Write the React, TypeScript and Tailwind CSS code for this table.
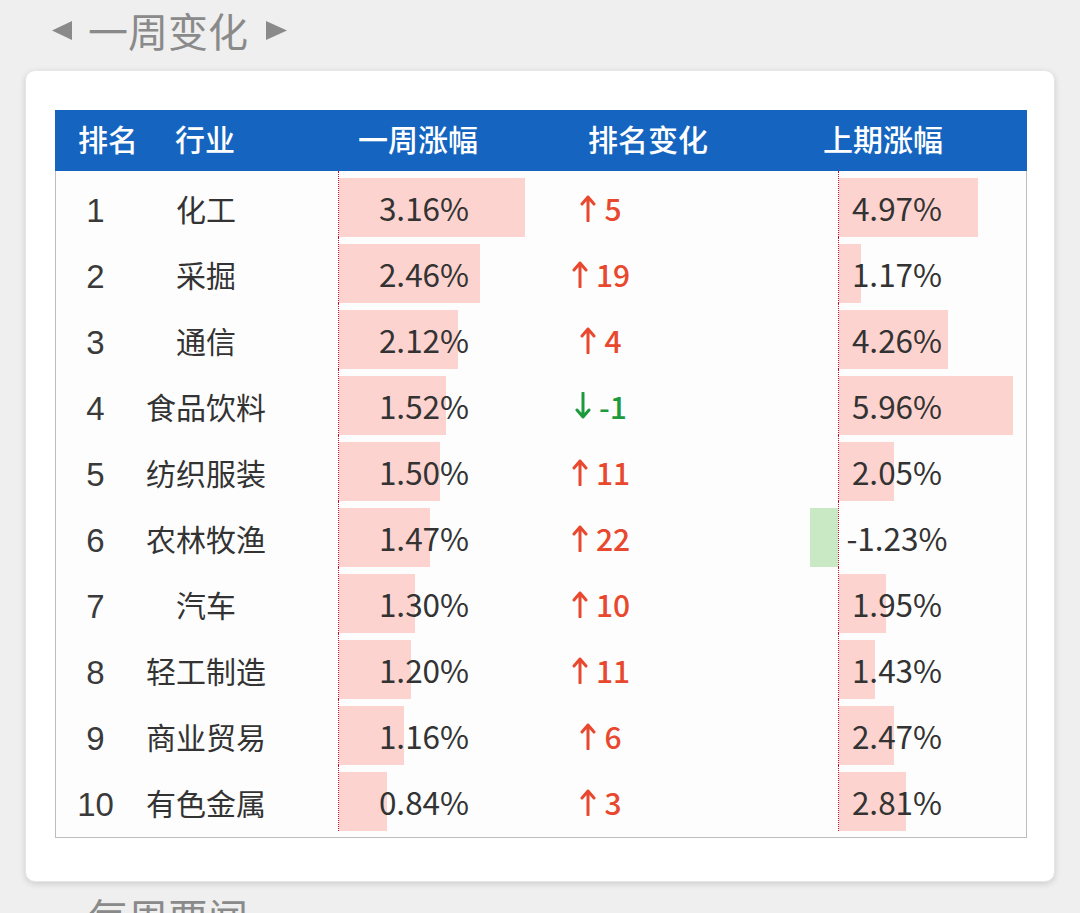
import React from "react";

type Row = {
  rank: number;
  name: string;
  week: string;
  weekW: number;
  change: number;
  prev: string;
  prevW: number;
};

const rows: Row[] = [
  { rank: 1, name: "化工", week: "3.16%", weekW: 186, change: 5, prev: "4.97%", prevW: 139 },
  { rank: 2, name: "采掘", week: "2.46%", weekW: 141, change: 19, prev: "1.17%", prevW: 22 },
  { rank: 3, name: "通信", week: "2.12%", weekW: 119, change: 4, prev: "4.26%", prevW: 109 },
  { rank: 4, name: "食品饮料", week: "1.52%", weekW: 107, change: -1, prev: "5.96%", prevW: 174 },
  { rank: 5, name: "纺织服装", week: "1.50%", weekW: 101, change: 11, prev: "2.05%", prevW: 55 },
  { rank: 6, name: "农林牧渔", week: "1.47%", weekW: 91, change: 22, prev: "-1.23%", prevW: -28 },
  { rank: 7, name: "汽车", week: "1.30%", weekW: 76, change: 10, prev: "1.95%", prevW: 47 },
  { rank: 8, name: "轻工制造", week: "1.20%", weekW: 72, change: 11, prev: "1.43%", prevW: 36 },
  { rank: 9, name: "商业贸易", week: "1.16%", weekW: 65, change: 6, prev: "2.47%", prevW: 55 },
  { rank: 10, name: "有色金属", week: "0.84%", weekW: 48, change: 3, prev: "2.81%", prevW: 67 },
];

function Arrow({ up }: { up: boolean }) {
  return (
    <svg width="16" height="28" viewBox="0 0 16 28" className="mr-[8px]">
      {up ? (
        <path d="M8 27 V3 M2 10 L8 3 L14 10" fill="none" stroke="currentColor" strokeWidth="3" strokeLinecap="round" strokeLinejoin="round" />
      ) : (
        <path d="M8 1 V25 M2 18 L8 25 L14 18" fill="none" stroke="currentColor" strokeWidth="3" strokeLinecap="round" strokeLinejoin="round" />
      )}
    </svg>
  );
}

export default function App() {
  return (
    <div className="w-[1080px] h-[913px] overflow-hidden bg-[#efefef] font-['Noto_Sans_CJK_SC',sans-serif]">
      <div className="h-[70px] flex items-center pl-[52px] pb-[10px] text-[#8a8a8a]">
        <svg width="20" height="19" viewBox="0 0 20 19">
          <polygon points="20,0 20,19 0,9.5" fill="#8a8a8a" />
        </svg>
        <span className="ml-[16px] text-[40px] leading-none">一周变化</span>
        <svg width="21" height="19" viewBox="0 0 21 19" className="ml-[18px]">
          <polygon points="0,0 0,19 21,9.5" fill="#8a8a8a" />
        </svg>
      </div>

      <div className="ml-[25px] w-[1030px] h-[812px] bg-white rounded-[10px] shadow-[0_2px_6px_rgba(0,0,0,0.14)] border border-[#e6e6e6] pt-[39px] pl-[29px]">
        <div className="w-[972px]">
          <div className="h-[61px] bg-[#1565c0] flex items-center pl-[23px] pb-[5px] text-white text-[30px] font-medium leading-none">
            <div className="w-[97px]">排名</div>
            <div className="w-[183px]">行业</div>
            <div className="w-[230px]">一周涨幅</div>
            <div className="w-[235px]">排名变化</div>
            <div>上期涨幅</div>
          </div>
          <div className="border-x border-b border-[#bdbdbd] bg-[#fdfdfd] pb-[6px] text-[#333333] text-[30px] leading-none">
            {rows.map((r) => (
              <div key={r.rank} className="flex h-[66px]">
                <div className="w-[79px] pt-[12px] flex items-center justify-center font-['Liberation_Sans',sans-serif] text-[33px] text-[#3a3a3a]">
                  {r.rank}
                </div>
                <div className="w-[142px] pt-[7px] flex items-center justify-center">{r.name}</div>
                <div className="w-[61px]" />
                <div className="w-[200px] relative border-l border-dotted border-[#c8102e]">
                  <div className="absolute left-0 top-[7px] h-[59px] bg-[#fdd3cf]" style={{ width: r.weekW }} />
                  <div className="relative mt-[7px] w-[170px] h-[59px] flex items-center justify-center text-[31.5px]">{r.week}</div>
                </div>
                <div
                  className={
                    "w-[126px] pt-[7px] flex items-center justify-center font-medium " +
                    (r.change > 0 ? "text-[#e8482e]" : "text-[#1d9a3e]")
                  }
                >
                  <Arrow up={r.change > 0} />
                  <span>{r.change}</span>
                </div>
                <div className="w-[114px]" />
                <div className="w-[60px] pt-[7px] flex justify-end">
                  {r.prevW < 0 && <div className="h-[59px] bg-[#c9e9c5]" style={{ width: -r.prevW }} />}
                </div>
                <div className="flex-1 relative border-l border-dotted border-[#c8102e]">
                  {r.prevW > 0 && (
                    <div className="absolute left-0 top-[7px] h-[59px] bg-[#fdd3cf]" style={{ width: r.prevW }} />
                  )}
                  <div className="relative mt-[7px] w-[116px] h-[59px] flex items-center justify-center text-[31.5px]">{r.prev}</div>
                </div>
              </div>
            ))}
          </div>
        </div>
      </div>

      <div className="pl-[88px] mt-[14px] text-[40px] leading-none text-[#8a8a8a]">每周要闻</div>
    </div>
  );
}
